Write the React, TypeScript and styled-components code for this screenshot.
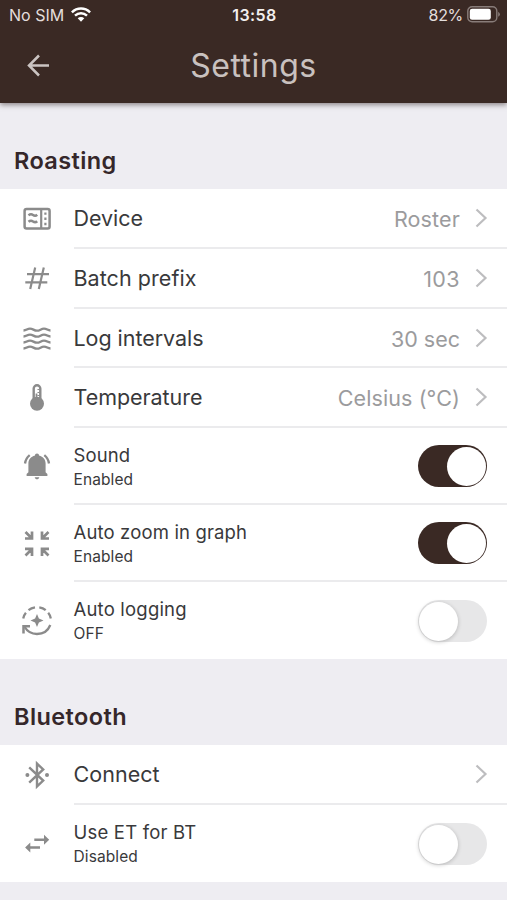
import React from "react";
import styled, { createGlobalStyle } from "styled-components";

const GlobalStyle = createGlobalStyle`
  * { box-sizing: border-box; }
  body { margin: 0; background: #eeedf2; font-family: Inter, "Liberation Sans", sans-serif; }
`;

const Screen = styled.main`
  width: 507px;
  height: 900px;
  overflow: hidden;
  background: #eeedf2;
`;

const Header = styled.header`
  height: 103px;
  background: #3a2924;
  box-shadow: 0 2px 5px rgba(50, 35, 35, 0.5);
`;

const StatusBar = styled.div`
  height: 29px;
  display: grid;
  grid-template-columns: 1fr auto 1fr;
  align-items: center;
  padding: 0 7px 0 9px;
  color: #e4dedc;
  font-size: 16px;
  line-height: 20px;
`;

const StatusGroup = styled.div<{ $end?: boolean }>`
  display: flex;
  align-items: center;
  gap: ${(p) => (p.$end ? 4 : 7)}px;
  justify-content: ${(p) => (p.$end ? "flex-end" : "flex-start")};
`;

const StatusText = styled.span<{ $spacing: number }>`
  letter-spacing: ${(p) => p.$spacing}px;
`;

const Clock = styled.time`
  font-weight: 600;
  letter-spacing: 0.4px;
  color: #f3efee;
`;

const NavBar = styled.div`
  height: 74px;
  display: grid;
  grid-template-columns: 76px 1fr 76px;
  align-items: center;
`;

const BackButton = styled.button`
  display: flex;
  justify-content: center;
  border: 0;
  padding: 0;
  background: none;
  color: #cbc4c2;
`;

const PageTitle = styled.h1`
  margin: 0;
  text-align: center;
  font-size: 32px;
  font-weight: 400;
  line-height: 40px;
  letter-spacing: 0.5px;
  color: #c9c1bf;
`;

const SectionTitle = styled.h2<{ $height: number }>`
  height: ${(p) => p.$height}px;
  margin: 0;
  padding: 0 14px 14px;
  display: flex;
  align-items: flex-end;
  font-size: 23.5px;
  font-weight: 600;
  line-height: 28px;
  letter-spacing: 0.4px;
  color: #35272a;
`;

const List = styled.div`
  background: #fff;
`;

const Row = styled.div<{ $height: number }>`
  height: ${(p) => p.$height}px;
  display: grid;
  grid-template-columns: 73.5px 1fr;
`;

const IconCell = styled.div`
  display: flex;
  align-items: center;
  justify-content: center;
  padding-left: 0.5px;
  color: #8b8b8b;
`;

const RowBody = styled.div<{ $last?: boolean }>`
  display: flex;
  align-items: center;
  justify-content: space-between;
  padding-right: 19px;
  border-bottom: ${(p) => (p.$last ? "0" : "2px solid #ebebed")};
`;

const Label = styled.span<{ $spacing: number }>`
  font-size: 21.5px;
  line-height: 28px;
  color: #39393b;
  letter-spacing: ${(p) => p.$spacing}px;
`;

const Trailing = styled.div`
  display: flex;
  align-items: center;
  gap: 14px;
  color: #9b9b9d;
`;

const Value = styled.span<{ $spacing: number }>`
  padding-top: 2px;
  font-size: 21.5px;
  line-height: 28px;
  letter-spacing: ${(p) => p.$spacing}px;
`;

const Stack = styled.div<{ $last?: boolean }>`
  display: flex;
  flex-direction: column;
  padding-top: ${(p) => (p.$last ? 0 : 2)}px;
`;

const StackLabel = styled.span<{ $spacing: number }>`
  font-size: 18.5px;
  line-height: 25px;
  color: #39393b;
  letter-spacing: ${(p) => p.$spacing}px;
`;

const StackState = styled.span<{ $spacing: number }>`
  font-size: 15.5px;
  line-height: 23px;
  color: #39393b;
  letter-spacing: ${(p) => p.$spacing}px;
`;

const Switch = styled.button<{ $on: boolean }>`
  width: 69.5px;
  height: 42px;
  margin: 1px 1px 0 0;
  padding: 1.5px 1px;
  border: 0;
  border-radius: 21px;
  display: flex;
  justify-content: ${(p) => (p.$on ? "flex-end" : "flex-start")};
  background: ${(p) => (p.$on ? "#3a2924" : "#e7e7e8")};
`;

const Knob = styled.span<{ $on: boolean }>`
  width: 39px;
  height: 39px;
  border-radius: 50%;
  background: #fff;
  box-shadow: ${(p) => (p.$on ? "none" : "0 1px 4px rgba(0, 0, 0, 0.22)")};
`;

const Svg = ({ children }: { children: React.ReactNode }) => (
  <svg width="32" height="32" viewBox="0 0 32 32" fill="none" stroke="currentColor" strokeWidth="2">
    {children}
  </svg>
);

const DeviceIcon = () => (
  <Svg>
    <rect x="3.6" y="6" width="25" height="19.4" rx="2" strokeWidth="2.5" />
    <path d="M20.2 6v19" strokeWidth="2.2" />
    <path d="M7.5 12.400q2.300-2 4.500-.4t4.200-.2M7.500 18.800q2.300-2 4.500-.4t4.200-.2" strokeWidth="2.500" />
    <path d="M24.400 9.400v2.400M24.400 14.600v2.400M24.400 19.800v2.400" strokeWidth="2.200" />
  </Svg>
);

const HashIcon = () => (
  <Svg>
    <path d="M14.200 4.500 9.200 26M22.800 4.500 17.800 26M6 11.200h22M4.300 19.300h22" strokeWidth="2.200" />
  </Svg>
);

const WavesIcon = () => (
  <Svg>
    {[6.5, 12.5, 18.5, 24.5].map((y) => (
      <path key={y} d={`M2.500 ${y + 1}c3 0 3.600-1.900 6.500-1.900s4 2.100 7 2.100 4-2.100 7-2.100 3.500 1.900 6.500 1.900`} strokeWidth="2.300" />
    ))}
  </Svg>
);

const ThermometerIcon = () => (
  <Svg>
    <path d="M12.700 18V6.600a3.300 3.300 0 0 1 6.600 0V18" strokeWidth="2.400" />
    <circle cx="16" cy="21.800" r="7" fill="currentColor" stroke="none" />
    <path d="M15.500 18V11.500" strokeWidth="1.800" />
    <path d="M16.500 7.500h2M16.500 10.500h2M16.500 13.500h2" strokeWidth="1" />
  </Svg>
);

const BellIcon = () => (
  <Svg>
    <path
      d="M16 2.500c1.300 0 2 .8 2 2 4.300 1.100 6.600 4 6.600 8v8.800l1.800 1.600v2H5.600v-2l1.800-1.600v-8.800c0-4 2.300-6.900 6.600-8 0-1.200.7-2 2-2zM13.700 26.200h4.600c-.4 1.400-1.200 2-2.300 2s-1.900-.6-2.300-2z"
      fill="currentColor"
      stroke="none"
    />
    <path d="M4 12.500c.4-3.400 2-6.200 4.700-8.400M28 12.500c-.4-3.400-2-6.200-4.700-8.400" strokeWidth="2.300" />
  </Svg>
);

const CollapseIcon = () => (
  <Svg>
    <path
      d="M4.500 4l5.500 5.500M11 3.500V10.500H4M27.500 4l-5.500 5.500M21 3.500V10.500H28M4.500 27.500l5.500-5.500M11 28v-7.200H4M27.500 27.500l-5.500-5.500M21 28v-7.200H28"
      strokeWidth="2.700"
    />
  </Svg>
);

const AutoLogIcon = () => (
  <Svg>
    <path d="M2.200 13.500q.7-3.300 2.700-5.700M7.500 5.100Q10.300 2.900 14 2.300M18.300 2.300q3.800.6 6.400 2.800M27.200 7.800q2 2.400 2.600 5.700" strokeWidth="2.300" />
    <path d="M29.300 20C27 25.800 22 29 16 29c-5.200 0-9.800-2.700-12.300-7" strokeWidth="2.300" />
    <path d="M2.500 28.500v-7.300H9" strokeWidth="2.500" />
    <path d="M16 9l1.900 4.600 4.600 1.900-4.600 1.900L16 22l-1.900-4.600-4.600-1.900 4.600-1.900z" fill="currentColor" stroke="none" />
  </Svg>
);

const BluetoothIcon = () => (
  <Svg>
    <path d="m8.200 8.300 14 13.300-6.200 5.800V4.600l6.200 5.800-14 13.300" strokeWidth="2.400" />
    <circle cx="6.400" cy="16" r="2" fill="currentColor" stroke="none" />
    <circle cx="26" cy="16" r="2" fill="currentColor" stroke="none" />
  </Svg>
);

const SwapIcon = () => (
  <Svg>
    <path d="M13.300 11.700H25M19 19.500H7" strokeWidth="2.500" />
    <path d="M23 6.700l5.200 5L23 16.700zM9.300 14.500l-5.200 5 5.200 5z" fill="currentColor" stroke="none" />
  </Svg>
);

const Chevron = () => (
  <svg width="14" height="20" viewBox="0 0 14 20" fill="none" stroke="#bdbdbf" strokeWidth="2.200">
    <path d="M2.500 1.500 11.500 10l-9 8.500" />
  </svg>
);

const BackArrow = () => (
  <svg width="24" height="24" viewBox="0 0 24 24" fill="none" stroke="currentColor" strokeWidth="2.500">
    <path d="M23 11.500H3M13 1.500 3 11.500l10 10" />
  </svg>
);

const Wifi = () => (
  <svg width="20" height="15" viewBox="0 0 20 15" fill="none" stroke="#fff" strokeWidth="2.500">
    <path d="M.9 5.300c5.200-5 13-5 18.200 0M4 8.700c3.500-3.300 8.500-3.300 12 0" />
    <path d="m10 14.700-3.300-3.500c1.900-1.700 4.700-1.700 6.600 0z" fill="#fff" stroke="none" />
  </svg>
);

const Battery = () => (
  <svg width="33" height="17" viewBox="0 0 33 17">
    <rect x=".8" y=".8" width="29" height="15" rx="4.300" fill="none" stroke="#887c79" strokeWidth="1.400" />
    <rect x="2.800" y="2.800" width="21" height="11" rx="2.300" fill="#fff" />
    <path d="M31.200 5.800q1.700 1 1.700 2.500t-1.700 2.500z" fill="#887c79" />
  </svg>
);

type LinkRowProps = {
  icon: React.ReactNode;
  label: string;
  spacing: number;
  value?: string;
  valueSpacing?: number;
  height: number;
};

const LinkRow = ({ icon, label, spacing, value, valueSpacing = 0.1, height }: LinkRowProps) => (
  <Row $height={height}>
    <IconCell>{icon}</IconCell>
    <RowBody>
      <Label $spacing={spacing}>{label}</Label>
      <Trailing>
        {value && <Value $spacing={valueSpacing}>{value}</Value>}
        <Chevron />
      </Trailing>
    </RowBody>
  </Row>
);

type SwitchRowProps = {
  icon: React.ReactNode;
  label: string;
  spacing: number;
  state: string;
  stateSpacing?: number;
  on?: boolean;
  last?: boolean;
  height: number;
};

const SwitchRow = ({ icon, label, spacing, state, stateSpacing = 0.1, on = false, last, height }: SwitchRowProps) => (
  <Row $height={height}>
    <IconCell>{icon}</IconCell>
    <RowBody $last={last}>
      <Stack $last={last}>
        <StackLabel $spacing={spacing}>{label}</StackLabel>
        <StackState $spacing={stateSpacing}>{state}</StackState>
      </Stack>
      <Switch $on={on} role="switch" aria-checked={on} aria-label={label}>
        <Knob $on={on} />
      </Switch>
    </RowBody>
  </Row>
);

export default function App() {
  return (
    <Screen>
      <GlobalStyle />
      <Header>
        <StatusBar>
          <StatusGroup>
            <StatusText $spacing={0}>No SIM</StatusText>
            <Wifi />
          </StatusGroup>
          <Clock>13:58</Clock>
          <StatusGroup $end>
            <StatusText $spacing={-0.3}>82%</StatusText>
            <Battery />
          </StatusGroup>
        </StatusBar>
        <NavBar>
          <BackButton aria-label="Back">
            <BackArrow />
          </BackButton>
          <PageTitle>Settings</PageTitle>
        </NavBar>
      </Header>

      <SectionTitle $height={86}>Roasting</SectionTitle>
      <List>
        <LinkRow height={60} icon={<DeviceIcon />} label="Device" spacing={-0.05} value="Roster" valueSpacing={0.15} />
        <LinkRow height={60} icon={<HashIcon />} label="Batch prefix" spacing={0.05} value="103" valueSpacing={0.4} />
        <LinkRow height={59} icon={<WavesIcon />} label="Log intervals" spacing={-0.05} value="30 sec" valueSpacing={0} />
        <LinkRow height={60} icon={<ThermometerIcon />} label="Temperature" spacing={-0.05} value="Celsius (°C)" />
        <SwitchRow height={77} icon={<BellIcon />} label="Sound" spacing={0.1} state="Enabled" on />
        <SwitchRow height={77} icon={<CollapseIcon />} label="Auto zoom in graph" spacing={0.15} state="Enabled" on />
        <SwitchRow height={77} icon={<AutoLogIcon />} label="Auto logging" spacing={0.2} state="OFF" last />
      </List>

      <SectionTitle $height={86}>Bluetooth</SectionTitle>
      <List>
        <LinkRow height={60} icon={<BluetoothIcon />} label="Connect" spacing={0.05} />
        <SwitchRow height={77} icon={<SwapIcon />} label="Use ET for BT" spacing={0.2} state="Disabled" last />
      </List>
    </Screen>
  );
}
